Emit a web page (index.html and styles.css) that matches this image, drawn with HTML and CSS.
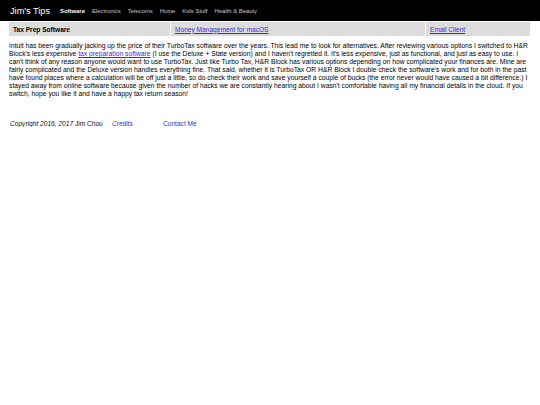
FILE: index.html
```html
<!DOCTYPE html>
<html lang="en">
<head>
<meta charset="utf-8">
<title>Jim's Tips</title>
<link rel="stylesheet" href="styles.css">
</head>
<body>
<header class="top">
  <span class="brand">Jim's Tips</span>
  <nav class="nav">
    <a class="nav-item active">Software</a>
    <a class="nav-item">Electronics</a>
    <a class="nav-item">Telecoms</a>
    <a class="nav-item">Home</a>
    <a class="nav-item">Kids Stuff</a>
    <a class="nav-item">Health &amp; Beauty</a>
  </nav>
</header>
<div class="tabs">
  <div class="tab current">Tax Prep Software</div>
  <div class="tab"><a href="#">Money Management for macOS</a></div>
  <div class="tab"><a href="#">Email Client</a></div>
</div>
<p class="article">Intuit has been gradually jacking up the price of their TurboTax software over the years. This lead me to look for alternatives. After reviewing various options I switched to H&amp;R Block's less expensive <a href="#">tax preparation software</a> (I use the Deluxe + State version) and I haven't regretted it. It's less expensive, just as functional, and just as easy to use. I can't think of any reason anyone would want to use TurboTax. Just like Turbo Tax, H&amp;R Block has various options depending on how complicated your finances are. Mine are fairly complicated and the Deluxe version handles everything fine. That said, whether it is TurboTax OR H&amp;R Block I double check the software's work and for both in the past have found places where a calculation will be off just a little, so do check their work and save yourself a couple of bucks (the error never would have caused a bit difference.) I stayed away from online software because given the number of hacks we are constantly hearing about I wasn't comfortable having all my financial details in the cloud. If you switch, hope you like it and have a happy tax return season!</p>
<footer class="foot">
  <span class="copy"><em class="years">Copyright 2016, 2017</em> Jim Chou</span>
  <a class="credits" href="#">Credits</a>
  <a class="contact" href="#">Contact Me</a>
</footer>
</body>
</html>
```
FILE: styles.css
```css
html, body {
  margin: 0;
  padding: 0;
  background: #fff;
  font-family: "Liberation Sans", Arial, sans-serif;
  color: #000;
}
.top {
  background: #000;
  height: 21px;
  display: flex;
  align-items: center;
  padding: 0 10px;
}
.brand {
  color: #fff;
  font-size: 9.2px;
  margin-right: 10px;
}
.nav {
  display: flex;
  gap: 7px;
}
.nav-item {
  color: #c8c8c8;
  font-size: 5.9px;
}
.nav-item.active {
  color: #fff;
  font-weight: bold;
}
.tabs {
  display: grid;
  grid-template-columns: 161px 254px 104px;
  column-gap: 1px;
  margin: 1px 9px 0 9px;
}
.tab {
  background: #dcdcdc;
  height: 14px;
  display: flex;
  align-items: center;
  padding-left: 4px;
  font-size: 6.6px;
}
.tab.current {
  font-weight: bold;
}
.tab a {
  color: #3333cc;
}
.article {
  margin: 6px 8px 0 9px;
  font-size: 6.76px;
  line-height: 8px;
}
.article a {
  color: #3333cc;
}
.foot {
  display: flex;
  margin: 22px 0 0 10px;
  font-size: 6.6px;
}
.copy {
  width: 102px;
  color: #111;
}
.years {
  font-style: italic;
}
.credits {
  color: #3333cc;
  font-style: italic;
  text-decoration: underline;
  width: 51px;
}
.contact {
  color: #3333cc;
  text-decoration: underline;
}
```
